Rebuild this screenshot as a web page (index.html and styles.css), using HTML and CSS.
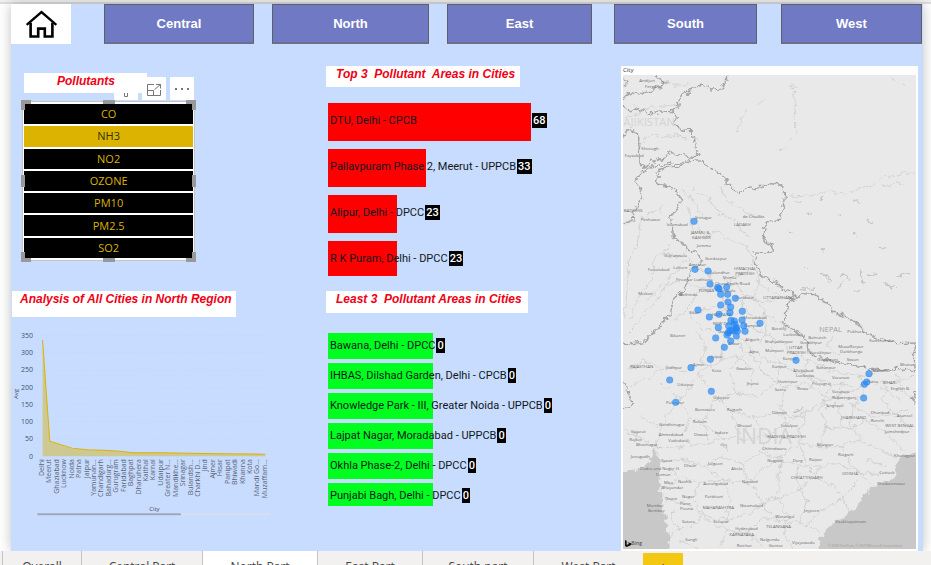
FILE: index.html
```html
<!DOCTYPE html>
<html lang="en">
<head>
<meta charset="utf-8">
<title>North Part</title>
<link rel="stylesheet" href="styles.css">
</head>
<body>
<div class="ribbon-edge"></div>
<main class="report">
  <nav class="regions">
    <a class="home" href="#" aria-label="Home">
      <svg viewBox="74 26 100 87" width="33" height="29"><path class="roof" d="M79 71L124 32L169 71"/><path class="walls" d="M91 64V106H114V82H134V106H157V64"/></svg>
    </a>
    <button class="region central">Central</button>
    <button class="region north">North</button>
    <button class="region east">East</button>
    <button class="region south">South</button>
    <button class="region west">West</button>
  </nav>
  <div class="columns">
    <section class="left">
      <div class="slicer-head">
        <h2 class="title slicer-title">Pollutants</h2>
        <div class="tools">
          <button class="tool" aria-label="Filters"><svg viewBox="0 0 24 23"><path d="M10.500 16V19.500H13.500V16"/></svg></button>
          <button class="tool" aria-label="Focus mode"><svg viewBox="0 0 24 23"><path d="M12 7.500H5.500V18.500H18.500V13M5.500 13.500H11.500V18.500M12.500 12.500L18.500 7.500M14 7.500H18.500V11.500"/></svg></button>
          <button class="tool" aria-label="More options"><svg viewBox="0 0 24 23"><path class="dots" d="M5 11h2v2h-2zM11 11h2v2h-2zM17 11h2v2h-2z"/></svg></button>
        </div>
      </div>
      <div class="slicer">
        <button class="option">CO</button>
        <button class="option selected">NH3</button>
        <button class="option">NO2</button>
        <button class="option">OZONE</button>
        <button class="option">PM10</button>
        <button class="option">PM2.5</button>
        <button class="option">SO2</button>
        <i class="handle nw"></i><i class="handle n"></i><i class="handle ne"></i>
        <i class="handle w"></i><i class="handle e"></i>
        <i class="handle sw"></i><i class="handle s"></i><i class="handle se"></i>
      </div>
      <h2 class="title analysis-title">Analysis of All Cities in North Region</h2>
      <svg class="trend" viewBox="12 326 258 190" role="img" aria-label="Avg by City">
        <g class="grid"><path d="M37 335.500H270M37 352.500H270M37 370.500H270M37 387.500H270M37 404.500H270M37 421.500H270M37 438.500H270"/></g>
        <path class="area" d="M42.500 340L49.700 441L72 448L87 449.500L103 450L132 452L160 452.500L190 453L220 453.500L265 454V456H42.500Z"/>
        <path class="line" d="M42.500 340L49.700 441L72 448L87 449.500L103 450L120 451L132 452.500L160 452.500L190 453L220 453.500L265 454"/>
        <g class="ticks">
          <text x="33" y="338">350</text><text x="33" y="355">300</text><text x="33" y="372">250</text><text x="33" y="390">200</text><text x="33" y="407">150</text><text x="33" y="424">100</text><text x="33" y="441">50</text><text x="33" y="459">0</text>
        </g>
        <g class="cities" id="cities"></g>
        <text class="axis" transform="translate(18 399) rotate(-90)">Avg</text>
        <text class="axis" x="149" y="511">City</text>
        <rect class="track" x="37" y="513" width="233" height="2" rx="1"/>
        <rect class="thumb" x="37" y="513" width="144" height="2" rx="1"/>
      </svg>
    </section>

    <section class="middle">
      <h2 class="title top-title">Top 3  Pollutant  Areas in Cities</h2>
      <ul class="bars top">
        <li><i class="bar" style="width:69.300%"></i><p><span style="min-width:69.300%">DTU, Delhi - CPCB</span><b>68</b></p></li>
        <li><i class="bar" style="width:33.500%"></i><p><span style="min-width:33.500%">Pallavpuram Phase 2, Meerut - UPPCB</span><b>33</b></p></li>
        <li><i class="bar" style="width:23.400%"></i><p><span style="min-width:23.400%">Alipur, Delhi - DPCC</span><b>23</b></p></li>
        <li><i class="bar" style="width:23.400%"></i><p><span style="min-width:23.400%">R K Puram, Delhi - DPCC</span><b>23</b></p></li>
      </ul>
      <h2 class="title least-title">Least 3  Pollutant Areas in Cities</h2>
      <ul class="bars least">
        <li><i class="bar"></i><p><span>Bawana, Delhi - DPCC</span><b>0</b></p></li>
        <li><i class="bar"></i><p><span>IHBAS, Dilshad Garden, Delhi - CPCB</span><b>0</b></p></li>
        <li><i class="bar"></i><p><span>Knowledge Park - III, Greater Noida - UPPCB</span><b>0</b></p></li>
        <li><i class="bar"></i><p><span>Lajpat Nagar, Moradabad - UPPCB</span><b>0</b></p></li>
        <li><i class="bar"></i><p><span>Okhla Phase-2, Delhi - DPCC</span><b>0</b></p></li>
        <li><i class="bar"></i><p><span>Punjabi Bagh, Delhi - DPCC</span><b>0</b></p></li>
      </ul>
    </section>

    <section class="map-card">
      <h3 class="map-title">City</h3>
      <svg class="map" viewBox="9 225 879 1422" preserveAspectRatio="xMidYMid slice" role="img" aria-label="City map">
        <defs>
          <filter id="ragged" filterUnits="userSpaceOnUse" x="0" y="200" width="900" height="1460">
            <feTurbulence type="fractalNoise" baseFrequency="0.05" numOctaves="3" seed="4" result="noise"/>
            <feDisplacementMap in="SourceGraphic" in2="noise" scale="26" xChannelSelector="R" yChannelSelector="G"/>
          </filter>
        </defs>
        <rect class="land" x="9" y="225" width="879" height="1422"/>
        <g filter="url(#ragged)">
        <path class="sea" d="M-20 1416L40 1412L60 1404L90 1390L97 1370L100 1342L110 1355L122 1380L115 1420L120 1450L125 1500L130 1530L140 1570L148 1610L150 1680H-20Z"/>
        <path class="sea" d="M910 1345L870 1365L845 1370L828 1385L822 1395L827 1412L825 1430L800 1445L780 1455L755 1462L735 1482L712 1518L690 1540L650 1565L615 1597L595 1612V1625L603 1680H910Z"/>
        <g class="roads">
          <path d="M9 352L30 350L60 340L90 322L130 318L178 313M135 240L160 255L205 255M62 430L85 410L105 405L130 412L160 405L205 418M515 248L525 290L527 400M520 265H535M415 312L432 305M380 328L365 350L355 375L352 400M505 420L520 408M480 445L490 450L500 442M815 235L825 242M845 252L858 256"/>
          <path d="M690 580L720 565L760 555L780 535L815 530L850 520L888 519M790 560L850 545M505 585L580 588L620 570L680 582M215 560L235 580L270 600L300 640L340 660L385 710M120 640L125 620L105 632L70 650M60 665L55 720L30 780L22 850L15 950M150 740L105 775L95 840L50 900L30 960M205 745L185 770L130 760M235 680L255 710L300 690L330 725L380 735L405 790M180 570L230 610L250 650M300 560L320 600L380 640L430 650M200 620L220 690"/>
          <path d="M200 770L220 800L270 820L275 860L310 870L320 930L345 980L360 1040L400 1075L440 1130L500 1160L560 1150L620 1190L680 1180L740 1150L800 1150L888 1130M200 780L150 830L110 900L60 960L20 1000M180 850L130 850L80 900M120 1100L70 1080L20 1110M400 960L380 930L360 900"/>
          <path d="M400 790L420 850L460 880L520 900M310 840L350 850L375 890L370 920L350 940M345 990L300 1000L240 980L205 940M345 980L310 1020L300 1080L235 1120L200 1180L150 1230L120 1290L105 1340M275 860L230 880L200 930L160 960M310 870L340 830L390 810M330 930L280 920L230 940"/>
          <path d="M345 980L400 990L460 1010L500 1040L560 1080L630 1110L720 1130L770 1120M350 1000L400 1050L440 1080L500 1100L560 1130L640 1150L700 1160M235 1120L280 1180L330 1230L400 1250L470 1240L540 1250L600 1210L650 1190L700 1220L760 1250L820 1240L880 1290M300 1080L350 1070L400 1110L390 1160M400 980L430 940L470 960L520 1000"/>
          <path d="M100 1345L150 1345L210 1335L260 1330L320 1310L370 1320L440 1305L500 1270L560 1230M120 1385L200 1380L250 1400L300 1370L370 1390L420 1360L480 1370L540 1330L600 1340L660 1340L720 1320L780 1350L830 1370"/>
          <path d="M125 1470L180 1430L240 1450L310 1440L380 1450L440 1400L480 1380L520 1390L580 1400L650 1390L720 1420L790 1420M130 1500L200 1510L260 1560L320 1590L380 1600L430 1640M480 1370L475 1500L500 1540L490 1600L520 1650M400 1460L440 1530L470 1560L540 1570L600 1600"/>
          <path d="M150 1600L210 1580L250 1550L320 1560L390 1540L440 1500L500 1490L560 1450L600 1400M180 1620L240 1650M320 1590L300 1640M380 1600L420 1560L490 1550M540 1330L560 1400L600 1440L650 1460L690 1540M660 1340L700 1400L740 1440L760 1450M560 1580L590 1540L650 1510L690 1470L720 1440"/>
          <path d="M270 1330L250 1270L280 1200L350 1180L420 1190L460 1150M350 1180L330 1110L370 1060M500 1270L480 1220L500 1160M600 1340L620 1280L600 1230L620 1190M700 1220L690 1280L730 1320M30 1160L90 1130L140 1100L200 1110M120 1150L180 1200L210 1250L190 1310L210 1335M210 1250L280 1290L330 1320M60 1250L110 1280M9 1290L60 1310L97 1340"/>
          <path d="M420 850L400 890L430 930L440 990L420 1030M375 890L420 905L470 900M205 850L250 870L270 850M230 1000L260 1040L240 1080L280 1110M460 1010L450 1050L480 1090L470 1150M560 1080L550 1120L590 1150M640 1000L620 1040L660 1070M720 1130L730 1180L700 1220M800 1150L790 1200L820 1240L870 1230M830 1120L850 1180L888 1190"/>
          <path d="M240 1450L220 1500L250 1550M310 1440L330 1500L320 1560M540 1400L530 1450L560 1500L540 1570M150 1400L170 1430M160 1530L150 1560L190 1600M250 1400L310 1440M370 1390L380 1450M610 1280L680 1290L740 1260L800 1300L850 1350M560 1230L540 1290L540 1330M440 1305L420 1360M330 1230L370 1320M400 1250L440 1305M640 1150L610 1190M660 1160L650 1230L680 1290M780 1160L840 1200M740 1380L800 1400"/>
        </g>
        <path class="lakes" d="M520 605L545 610M600 600L612 590M700 605L720 610M560 640H575M650 650L665 645M740 660L755 668M505 690L520 695M600 750L615 745M545 800L560 812M700 700L712 705M780 745L800 750M830 830L870 818M560 860L585 870M600 815L620 830L630 850M650 870L670 850M720 810L735 850M700 870L720 875M790 850L830 860M740 830L770 820M660 825L690 835M540 865L560 868M300 1335L322 1335L315 1350M520 1240L550 1225M615 1230L630 1215M105 1330L125 1350"/>
        <g class="borders">
          <path d="M325 225L318 240L305 262L290 268L270 270L262 252L255 262L245 255L225 262L205 275L180 292L175 305L178 325L158 332L130 332L100 338L92 345L75 334L60 332L45 322L28 330L9 322M9 238L22 248L14 256M9 300L14 285L35 278L55 285L75 275L95 270L110 260L125 262L135 245L120 235L105 228"/>
          <path d="M158 332L165 350L172 380L185 390L210 392L215 410L230 425L232 450L238 462L220 468L195 468L180 468L155 458L130 468L115 480L95 485L85 498L68 504L58 490L55 460L60 430L50 400L30 392L15 400L9 410"/>
          <path d="M205 470L210 485L175 490L140 492L100 498L75 510L45 542L60 565L65 595L50 620L38 640L35 668L9 672M210 485L248 482L270 505L300 520L320 540L322 552L345 570L358 578L390 565L420 560L450 548L480 555L495 580L490 610L480 660L455 667L432 680L428 710L440 725L460 745L440 760L405 755L410 790L420 820L450 840L480 858L520 880L535 895"/>
          <path d="M205 483L180 500L140 500L115 515L110 545L140 560L165 570L187 600L165 625L155 650L160 710L175 725L210 745L240 770L250 778L235 795L215 805L205 840L190 870L155 905L150 940L130 970L95 1005L75 1025L30 1032L9 1028"/>
          <path d="M535 895L505 905L500 930L485 970L515 985L550 1010L562 1035L565 1060L600 1074L640 1085L690 1092L740 1105L780 1112L830 1105L880 1112L888 1090M535 895L548 881L590 885L605 902L620 908L640 935L680 950L720 978L740 1000L790 1020L830 1028L888 1026M888 1032L880 1060L885 1085M9 1140L20 1160L25 1190L38 1210L28 1225L9 1222M888 1180L872 1190L888 1210"/>
        </g>
        </g>
        <g class="country"><text x="10" y="379" font-size="34">AJIKISTAN</text><text x="345" y="1333" font-size="64">INDIA</text></g>
        <text class="nepal" x="598" y="995">NEPAL</text>
        <g class="places" id="places"></g>
        <g class="points" id="points"></g>
        <path class="bing-mark" d="M15 1620L20 1622V1635L27 1631L22 1627L34 1630V1635L20 1641L15 1638Z"/>
        <text class="bing" x="34" y="1635">Bing</text>
        <text class="credit" x="623" y="1640">© 2023 TomTom, © 2023 Microsoft Corporation</text>
      </svg>
    </section>
  </div>
</main>
<nav class="tabs">
  <a href="#" class="tab t1">Overall</a>
  <a href="#" class="tab t2">Central Part</a>
  <a href="#" class="tab t3 active">North Part</a>
  <a href="#" class="tab t4">East Part</a>
  <a href="#" class="tab t5">South part</a>
  <a href="#" class="tab t6">West Part</a>
  <button class="add">+</button>
</nav>
<script src="charts.js"></script>
</body>
</html>
```
FILE: styles.css
```css
* { box-sizing: border-box; }
body {
  margin: 0;
  height: 100vh;
  display: flex;
  flex-direction: column;
  overflow: hidden;
  background: #fff;
  font-family: "Open Sans", "Noto Sans", sans-serif;
}
button { border: 0; padding: 0; font: inherit; }
h2, h3, p, ul { margin: 0; padding: 0; font-weight: normal; }

.ribbon-edge { flex: none; height: 4px; background: #f0f0f0; border-bottom: 2px solid #dedede; }

.report {
  flex: 1;
  min-height: 0;
  margin: 0 8px 0 11px;
  display: flex;
  flex-direction: column;
  background: #c8dcff;
  box-shadow: 0 0 12px rgba(0, 0, 0, .25);
}

.regions {
  flex: none;
  display: grid;
  grid-template-columns: 60fr 33fr 150fr 18fr 157fr 18fr 145fr 22fr 143fr 24fr 141fr 1fr;
  height: 40px;
}
.home { display: flex; align-items: center; justify-content: center; background: #fff; }
.home path { fill: none; stroke: #000; }
.home .roof { stroke-width: 7; }
.home .walls { stroke-width: 8; }
.region {
  background: #7079c4;
  border: 1px solid #5d6068;
  border-bottom: 2px solid #6b6f8c;
  color: #fff;
  font: bold 13px "Liberation Sans", sans-serif;
}
.central { grid-column: 3; }
.north { grid-column: 5; }
.east { grid-column: 7; }
.south { grid-column: 9; }
.west { grid-column: 11; }

.columns {
  flex: 1;
  min-height: 0;
  display: grid;
  grid-template-columns: 315fr 295fr 297fr 5fr;
}

.title {
  width: fit-content;
  background: #fff;
  color: #f00014;
  font: italic bold 12px/16px "Liberation Sans", sans-serif;
  white-space: pre;
}

.left { padding-top: 29px; }
.slicer-head { position: relative; height: 28px; margin-left: 13px; }
.slicer-title { position: relative; z-index: 1; height: 20px; padding: 0 32px 0 33px; }
.tools { position: absolute; left: 90px; top: 4px; display: flex; gap: 4px; }
.tool { width: 24px; height: 23px; background: #fff; }
.tool svg { display: block; }
.tool path { fill: none; stroke: #777; }
.tool .dots { fill: #777; stroke: none; }

.slicer {
  position: relative;
  width: 55%;
  height: 160px;
  margin-left: 11px;
  padding: 2px 1px;
  display: grid;
  grid-auto-rows: 1fr;
  gap: 2px;
  background: #fff;
  border: 1px solid #c4c4c4;
}
.option { background: #000; color: #dbb300; font-size: 11px; line-height: 18px; }
.option.selected { background: #dbb300; color: #2e3500; }
.handle { position: absolute; width: 10px; height: 10px; border: 0 solid #999; }
.nw { left: -2px; top: -2px; border-width: 4px 0 0 4px; }
.ne { right: -2px; top: -2px; border-width: 4px 4px 0 0; }
.sw { left: -2px; bottom: -2px; border-width: 0 0 4px 4px; }
.se { right: -2px; bottom: -2px; border-width: 0 4px 4px 0; }
.n, .s { left: calc(50% - 6px); width: 12px; height: 4px; background: #999; }
.n { top: -2px; }
.s { bottom: -2px; }
.w, .e { top: calc(50% - 6px); width: 4px; height: 12px; background: #999; }
.w { left: -2px; }
.e { right: -2px; }

.analysis-title { height: 26px; margin: 30px 0 9px 1px; padding: 0 4px 0 8px; }
.trend { display: block; width: 82%; margin-left: 1px; }
.grid path { fill: none; stroke: #bfcdec; stroke-width: 1; stroke-dasharray: 1 3; opacity: .6; }
.area { fill: #d3ba3a; fill-opacity: .55; }
.line { fill: none; stroke: #dbb300; stroke-width: 1; }
.ticks text { font-size: 7px; text-anchor: end; fill: #3b5573; }
.cities text { font-size: 7px; text-anchor: end; fill: #5a6276; }
.axis { font-size: 6px; fill: #454b5c; }
.track { fill: #d8def0; }
.thumb { fill: #9da8bf; }

.middle { padding-top: 22px; }
.top-title { height: 21px; padding: 0 5px 0 10px; }
.least-title { height: 22px; padding: 0 6px 0 10px; }
.bars {
  list-style: none;
  margin-left: 2px;
  display: grid;
  color: #101820;
  font-family: Roboto, sans-serif;
  font-size: 11px;
}
.bars li { display: grid; }
.bars .bar, .bars p { grid-area: 1 / 1; }
.bars p { display: flex; align-items: center; gap: 1px; white-space: nowrap; }
.bars span { padding-left: 2px; }
.bars b { padding: 0 1px; background: #000; color: #fff; font-weight: 500; line-height: 15px; }
.top { margin-top: 16px; margin-bottom: 12px; row-gap: 8px; grid-auto-rows: 38px; }
.top .bar { background: #f00; }
.top p { height: 35px; }
.top li:last-child .bar { height: 35px; }
.least { margin-top: 20px; row-gap: 4px; grid-auto-rows: 26px; }
.least .bar { width: 36%; background: #00ff1e; }
.least li:last-child .bar { height: 23px; }
.least p { height: 25px; }

.map-card {
  margin-top: 22px;
  padding: 0 2px 2px;
  min-height: 0;
  display: flex;
  flex-direction: column;
  background: #fff;
}
.map-title { font-size: 6px; line-height: 9px; color: #333; }
.map { display: block; flex: 1; min-height: 0; width: 100%; }
.land { fill: #e9e9e9; }
.sea { fill: #c8c8c8; }
.roads path { fill: none; stroke: #c6c6c6; stroke-width: 2; }
.lakes { fill: none; stroke: #c2c2c2; stroke-width: 4; }
.borders path { fill: none; stroke: #a4a4a4; stroke-width: 4; stroke-linejoin: round; }
.country text { fill: #d4d4d4; }
.nepal { font-size: 22px; fill: #a0a0a0; }
.places text { font-size: 13px; fill: #6c6c6c; }
.points circle { fill: #2388f5; fill-opacity: .68; stroke: #2388f5; stroke-opacity: .5; stroke-width: 2; }
.bing { font-size: 15px; font-weight: 600; fill: #555; }
.bing-mark { fill: #111; }
.credit { font-size: 10px; fill: #999; }

.tabs {
  flex: none;
  display: flex;
  height: 14px;
  padding-left: 2px;
  overflow: hidden;
  background: #f2f1f0;
}
.tab {
  height: 34px;
  border-left: 1px solid #c4c4c4;
  padding-top: 8px;
  color: #444;
  font-size: 12px;
  line-height: 16px;
  text-align: center;
  text-decoration: none;
  white-space: nowrap;
}
.tab.active { background: #fff; }
.t1 { flex: 0 0 79px; }
.t2 { flex: 0 0 121px; }
.t3 { flex: 0 0 115px; }
.t4 { flex: 0 0 105px; }
.t5 { flex: 0 0 111px; }
.t6 { flex: 0 0 110px; }
.add { flex: 0 0 40px; height: 30px; margin-top: 2px; background: #f2c811; color: #444; font-size: 16px; }
```
FILE: charts.js
```js
const NS = "http://www.w3.org/2000/svg";

function add(parent, tag, attrs, text) {
  const el = document.createElementNS(NS, tag);
  for (const key in attrs) el.setAttribute(key, attrs[key]);
  if (text) el.textContent = text;
  parent.appendChild(el);
}

const cities = ["Delhi", "Meerut", "Ghaziabad", "Lucknow", "Noida", "Patna", "Jaipur", "Yamunan...",
  "Chandigarh", "Bahadurg...", "Gurugram", "Faridabad", "Baghpat", "Dharuhera", "Kaithal", "Karnal",
  "Udaipur", "Greater N...", "Mandikhe...", "Srinagar", "Bulandsh...", "Charkhi D...", "Jind", "Ajmer",
  "Hisar", "Panipat", "Bhiwadi", "Khanna", "Kota", "Mandi Go...", "Muzaffarn..."];
const axis = document.getElementById("cities");
cities.forEach((name, i) => {
  const x = 44 + i * 222.6 / 30;
  add(axis, "text", { transform: `translate(${x} 459) rotate(-90)` }, name);
});

// Map labels: x, y, name
const places = [
  [58, 247, "Andijon"], [75, 265, "Fergana"], [122, 252, "Osh"], [64, 451, "Khorugh"], [14, 472, "Fayzabad"],
  [11, 637, "BADGHIS"], [62, 662, "Peshawar"], [140, 677, "Islamabad"], [225, 657, "Srinagar"],
  [368, 655, "de Chusku"], [342, 679, "LADAKH"], [212, 703, "JAMMU &"], [216, 716, "KASHMIR"], [230, 741, "Jammu"],
  [132, 771, "Gujranwala"], [255, 780, "Gurdaspur"], [84, 812, "Faisalabad"], [160, 807, "Lahore"], [206, 798, "Amritsar"],
  [342, 810, "HIMACHAL"], [346, 824, "PRADESH"], [272, 823, "Jalandhar"], [308, 837, "Shimla"], [168, 844, "Firozpur Ludhiana"],
  [285, 855, "Chandigarh Road"], [236, 876, "PUNJAB"], [178, 888, "Bathinda"], [300, 876, "Ambala"], [55, 886, "Multan"],
  [346, 897, "Haridwar"], [430, 897, "UTTARAKHAND"], [208, 942, "Sikar"], [275, 948, "HARYANA"], [278, 975, "NEW DELHI"],
  [370, 957, "Moradabad"], [372, 982, "Rampur"], [295, 998, "Gurgaon"], [150, 1012, "Bikaner"], [455, 990, "Bareilly"],
  [490, 1008, "Lucknow"], [565, 1018, "Bahraich"], [682, 1000, "Pokhara"], [748, 1027, "Kathmandu"], [376, 1022, "Aligarh"],
  [434, 1030, "Shahjahanpur"], [540, 1032, "Gorakhpur"], [507, 1048, "UTTAR"], [500, 1062, "PRADESH"], [436, 1056, "Mainpuri"],
  [655, 1045, "Muzaffarpur"], [660, 1060, "Darbhanga"], [568, 1062, "Gorakhpur"], [388, 1058, "Agra"], [325, 1036, "Alwar"],
  [592, 1082, "Gopalganj"], [680, 1082, "Siwan"], [274, 1074, "Jaipur"], [488, 1080, "Kanpur"],
  [30, 1104, "RAJASTHAN"], [138, 1107, "Jodhpur"], [218, 1098, "Ajmer"], [276, 1116, "Kota"], [348, 1110, "Gwalior"],
  [456, 1103, "Kanpur"], [588, 1107, "Sultanpur"], [840, 1098, "Bhutan"], [520, 1117, "Allahabad"], [528, 1131, "Lucknow"],
  [757, 1116, "Muzaffar"], [740, 1150, "Patna"], [788, 1152, "BIHAR"], [636, 1138, "Varanasi"], [172, 1159, "Udaipur"],
  [380, 1155, "Jhansi"], [474, 1149, "Hamirpur"], [576, 1155, "Prayagraj"], [464, 1173, "Satna"], [532, 1169, "Rewa"],
  [812, 1170, "English B."], [636, 1180, "Varanasi"], [636, 1196, "Robertsganj"], [280, 1198, "Udaipur"], [138, 1212, "Palanpur"],
  [225, 1233, "Banswara"], [320, 1233, "Rajgarh"], [618, 1222, "Singrauli"], [456, 1243, "Damoh"], [664, 1256, "JHARKHAND"],
  [752, 1243, "Dhanbad"], [752, 1266, "Ranchi"], [830, 1250, "Asansol"], [116, 1277, "Gandhinagar"], [218, 1269, "Ratlam"],
  [352, 1281, "Bhopal"], [484, 1280, "Jabalpur"], [796, 1281, "WEST BENGAL"], [32, 1298, "Gujarat"], [795, 1300, "Jamshedpur"],
  [116, 1309, "Ahmedabad"], [222, 1309, "Dewas"], [284, 1302, "Indore"], [442, 1314, "MADHYA PRADESH"], [145, 1325, "Vadodara"],
  [28, 1324, "Rajkot"], [48, 1339, "Bhavnagar"], [590, 1339, "Bilaspur"], [426, 1349, "Chhindwara"], [654, 1367, "Raigarh"],
  [32, 1375, "Junagadh"], [822, 1370, "Kharagpur"], [124, 1387, "Surat"], [192, 1402, "Dhule"], [264, 1396, "Jalgaon"],
  [442, 1387, "Nagpur"], [518, 1385, "Durg"], [567, 1384, "Raipur"], [60, 1411, "Dadra and Nagar H."], [334, 1411, "Akola"],
  [108, 1428, "Daman"], [666, 1425, "ODISHA"], [778, 1422, "Cuttack"], [174, 1448, "Nashik"], [250, 1455, "Aurangabad"],
  [365, 1449, "Nanded"], [512, 1437, "CHHATTISGARH"], [772, 1455, "Bhubaneswar"], [132, 1452, "Mira"], [124, 1468, "Bhayandar"],
  [134, 1501, "Thane"], [186, 1494, "Nagar"], [254, 1494, "Parbhani"], [80, 1522, "Mumbai"], [84, 1536, "Bombay"],
  [180, 1516, "Pune"], [180, 1530, "Poona"], [248, 1527, "MAHARASHTRA"], [360, 1520, "Nizamabad"], [552, 1536, "Jeypore"],
  [186, 1570, "Satara"], [280, 1570, "Solapur"], [466, 1555, "Warangal"], [644, 1568, "Visakhapatnam"], [346, 1590, "Hyderabad"],
  [438, 1583, "TELANGANA"], [328, 1609, "KARNATAKA"], [196, 1622, "Sangli"], [420, 1622, "Nalgonda"], [516, 1631, "Vijayawada"],
  [350, 1642, "Raichur"], [446, 1642, "Guntur"]];
const labels = document.getElementById("places");
places.forEach(([x, y, name]) => add(labels, "text", { x, y }, name));

// Monitoring stations
const points = [[222, 664], [225, 808], [264, 813], [270, 852], [293, 863], [297, 866], [320, 861], [302, 883],
  [323, 883], [346, 895], [324, 906], [302, 915], [332, 921], [330, 938], [297, 943], [234, 930], [268, 951],
  [367, 934], [295, 983], [287, 1014], [313, 1042], [271, 1078], [420, 970], [366, 960], [371, 977], [375, 994],
  [333, 961], [343, 963], [326, 978], [349, 983], [338, 992], [321, 1005], [332, 1023], [349, 1008], [352, 993],
  [325, 998], [345, 973], [348, 986], [330, 992], [528, 1081], [213, 1103], [149, 1140], [274, 1174], [167, 1207],
  [747, 1121], [740, 1146], [733, 1153], [731, 1194]];
const dots = document.getElementById("points");
points.forEach(([cx, cy]) => add(dots, "circle", { cx, cy, r: 10 }));
```
